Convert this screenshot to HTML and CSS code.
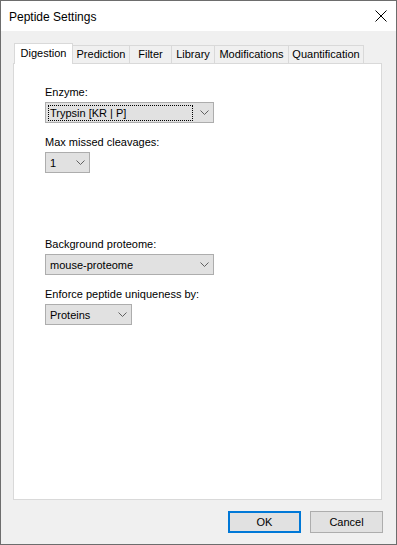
FILE: index.html
```html
<!DOCTYPE html>
<html lang="en">
<head>
    <meta charset="UTF-8">
    <meta name="viewport" content="width=device-width, initial-scale=1.0">
    <title>Peptide Settings</title>
    <link rel="stylesheet" href="styles.css">
</head>
<body>
    <div class="window">
        <div class="titlebar">
            <span class="title">Peptide Settings</span>
            <svg class="close" width="12" height="12" viewBox="0 0 12 12">
                <path d="M0.5 0.5 L11.5 11.5 M11.5 0.5 L0.5 11.5" stroke="#000" stroke-width="1" fill="none"/>
            </svg>
        </div>
        <div class="client">
            <div class="tabs">
                <div class="tab selected">Digestion</div>
                <div class="tab">Prediction</div>
                <div class="tab">Filter</div>
                <div class="tab">Library</div>
                <div class="tab">Modifications</div>
                <div class="tab">Quantification</div>
            </div>
            <div class="panel">
                <div class="field">
                    <label>Enzyme:</label>
                    <div class="combo combo-wide focused">
                        <span class="value">Trypsin [KR | P]</span>
                        <svg class="chevron" width="9" height="5" viewBox="0 0 9 5"><path d="M0.5 0.5 L4.5 4.5 L8.5 0.5" stroke="#606060" fill="none"/></svg>
                    </div>
                </div>
                <div class="field">
                    <label>Max missed cleavages:</label>
                    <div class="combo combo-small">
                        <span class="value">1</span>
                        <svg class="chevron" width="9" height="5" viewBox="0 0 9 5"><path d="M0.5 0.5 L4.5 4.5 L8.5 0.5" stroke="#606060" fill="none"/></svg>
                    </div>
                </div>
                <div class="field spaced">
                    <label>Background proteome:</label>
                    <div class="combo combo-wide">
                        <span class="value">mouse-proteome</span>
                        <svg class="chevron" width="9" height="5" viewBox="0 0 9 5"><path d="M0.5 0.5 L4.5 4.5 L8.5 0.5" stroke="#606060" fill="none"/></svg>
                    </div>
                </div>
                <div class="field">
                    <label>Enforce peptide uniqueness by:</label>
                    <div class="combo combo-medium">
                        <span class="value">Proteins</span>
                        <svg class="chevron" width="9" height="5" viewBox="0 0 9 5"><path d="M0.5 0.5 L4.5 4.5 L8.5 0.5" stroke="#606060" fill="none"/></svg>
                    </div>
                </div>
            </div>
            <div class="buttons">
                <button class="btn default">OK</button>
                <button class="btn">Cancel</button>
            </div>
        </div>
    </div>
</body>
</html>
```

FILE: styles.css
```css
body {
    margin: 0;
    font-family: "Liberation Sans", Arial, sans-serif;
    font-size: 11px;
    color: #000;
    background: #f0f0f0;
}
.window {
    width: 397px;
    height: 545px;
    box-sizing: border-box;
    border: 1px solid #6d6d6d;
    display: flex;
    flex-direction: column;
    background: #f0f0f0;
}
.titlebar {
    height: 30px;
    background: #fff;
    display: flex;
    align-items: center;
    justify-content: space-between;
    padding: 0 9px 0 8px;
}
.title {
    font-size: 12px;
    padding-top: 1px;
}
.close {
    display: block;
}
.client {
    flex: 1;
    display: flex;
    flex-direction: column;
    padding: 12px 14px 11px 12px;
}
.tabs {
    display: flex;
    align-items: flex-end;
    height: 21px;
    margin-bottom: -1px;
    padding-left: 1px;
    position: relative;
    z-index: 1;
}
.tab {
    box-sizing: border-box;
    height: 18px;
    margin-bottom: 1px;
    border: 1px solid #d9d9d9;
    border-bottom: none;
    border-left: none;
    background: #f0f0f0;
    text-align: center;
    line-height: 17px;
}
.tab.selected {
    height: 21px;
    margin-bottom: 0;
    background: #fff;
    border-left: 1px solid #d9d9d9;
    line-height: 18px;
}
.tab:nth-child(1) { width: 59px; }
.tab:nth-child(2) { width: 57px; }
.tab:nth-child(3) { width: 42px; }
.tab:nth-child(4) { width: 43px; }
.tab:nth-child(5) { width: 74px; }
.tab:nth-child(6) { width: 75px; }
.panel {
    flex: 1;
    background: #fff;
    border: 1px solid #d9d9d9;
    padding: 22px 0 0 31px;
}
.field {
    margin-bottom: 13px;
}
.field.spaced {
    margin-top: 65px;
}
.field label {
    display: block;
    line-height: 13px;
    margin-bottom: 3px;
}
.combo {
    box-sizing: border-box;
    height: 21px;
    display: flex;
    align-items: center;
    background: #e1e1e1;
    border: 1px solid #adadad;
    padding-left: 2px;
}
.combo-wide { width: 169px; }
.combo-small { width: 45px; }
.combo-medium { width: 87px; }
.combo .value {
    flex: 1;
    box-sizing: border-box;
    height: 16px;
    line-height: 14px;
    padding-left: 1px;
    border: 1px solid transparent;
    margin-right: 7px;
    white-space: nowrap;
}
.combo.focused .value {
    border: 1px dotted #000;
}
.chevron {
    display: block;
    margin-right: 4px;
}
.buttons {
    display: flex;
    justify-content: flex-end;
    gap: 9px;
    margin-top: 11px;
    margin-right: -1px;
}
.btn {
    box-sizing: border-box;
    width: 73px;
    height: 22px;
    background: #e1e1e1;
    border: 1px solid #adadad;
    font-family: "Liberation Sans", Arial, sans-serif;
    font-size: 11px;
    color: #000;
    padding: 0;
}
.btn.default {
    border: 2px solid #0078d7;
}
```
